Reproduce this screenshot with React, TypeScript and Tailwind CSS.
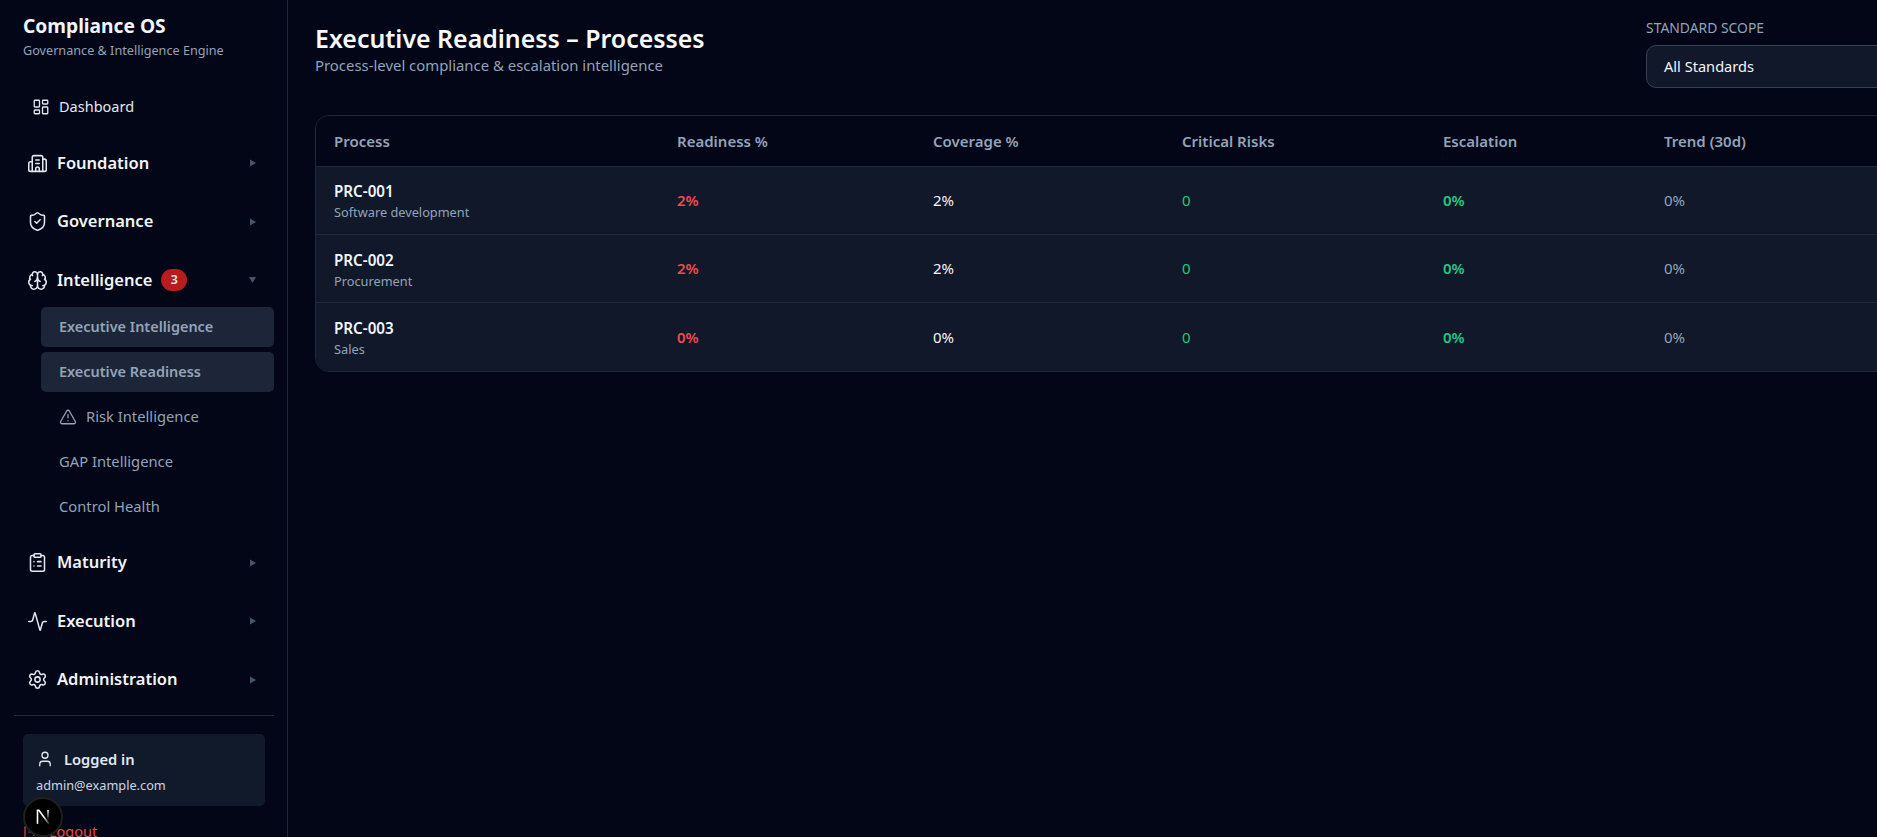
import { Activity, Brain, Building2, ClipboardList, LayoutDashboard, LogOut, Settings, ShieldCheck, TriangleAlert, User } from "lucide-react";
import type { ReactNode } from "react";

function Group({ icon, label, open, badge }: { icon: ReactNode; label: string; open?: boolean; badge?: string }) {
  return (
    <div className="flex h-[58.5px] items-center pl-[12px] pr-[18px]">
      <span className="flex w-[22px] justify-center text-[#e2e8f0]">{icon}</span>
      <span className="ml-[9px] text-[16.5px] font-semibold text-[#f1f5f9]">{label}</span>
      {badge && (
        <span className="ml-[9px] flex h-[22px] w-[26px] items-center justify-center rounded-full bg-[#b91c1c] text-[12.5px] font-semibold text-[#e2e8f0]">
          {badge}
        </span>
      )}
      <svg className="ml-auto text-[#475569]" width="7" height="8" viewBox="0 0 7 8" fill="currentColor">
        {open ? <path d="M0 1h7L3.5 7z" /> : <path d="M1 .5 7 4 1 7.5z" />}
      </svg>
    </div>
  );
}

function SubItem({ label, active, icon }: { label: string; active?: boolean; icon?: ReactNode }) {
  return (
    <div
      className={`flex h-[40px] items-center gap-[9px] rounded-[5px] pl-[18px] text-[#94a3b8] ${
        active ? "bg-[#1d2639] text-[14.45px] font-semibold" : "text-[14.75px]"
      }`}
    >
      {icon}
      <span>{label}</span>
    </div>
  );
}

const rows = [
  { id: "PRC-001", name: "Software development", r: "2%", c: "2%" },
  { id: "PRC-002", name: "Procurement", r: "2%", c: "2%" },
  { id: "PRC-003", name: "Sales", r: "0%", c: "0%" },
];

const heads = ["Process", "Readiness %", "Coverage %", "Critical Risks", "Escalation", "Trend (30d)"];

export default function App() {
  return (
    <div className="flex h-screen w-full overflow-hidden bg-[#020617] font-['Noto_Sans',sans-serif]">
      <aside className="relative flex h-full w-[288px] shrink-0 flex-col overflow-hidden border-r border-[#1e293b] bg-[#020617]">
        <div className="h-[86.5px] shrink-0 px-[23px] pt-[12px]">
          <div className="text-[19.2px] font-bold leading-[28px] text-[#f1f5f9]">Compliance OS</div>
          <div className="text-[12.65px] leading-[20px] text-[#94a3b8]">Governance &amp; Intelligence Engine</div>
        </div>
        <nav className="flex shrink-0 flex-col pl-[14px] pr-[13px]">
          <div className="flex h-[40px] items-center gap-[9px] pl-[18px] text-[14.5px] text-[#e2e8f0]">
            <LayoutDashboard size={18} strokeWidth={1.75} />
            <span>Dashboard</span>
          </div>
          <div className="mt-[7.5px]">
            <Group icon={<Building2 size={21} strokeWidth={1.75} />} label="Foundation" />
            <Group icon={<ShieldCheck size={21} strokeWidth={1.75} />} label="Governance" />
            <Group icon={<Brain size={21} strokeWidth={1.75} />} label="Intelligence" open badge="3" />
          </div>
          <div className="-mt-[3px] ml-[27px] flex flex-col gap-[5px]">
            <SubItem label="Executive Intelligence" active />
            <SubItem label="Executive Readiness" active />
            <SubItem label="Risk Intelligence" icon={<TriangleAlert size={18} strokeWidth={1.75} />} />
            <SubItem label="GAP Intelligence" />
            <SubItem label="Control Health" />
          </div>
          <div className="mt-[7px]">
            <Group icon={<ClipboardList size={21} strokeWidth={1.75} />} label="Maturity" />
            <Group icon={<Activity size={21} strokeWidth={1.75} />} label="Execution" />
            <Group icon={<Settings size={21} strokeWidth={1.75} />} label="Administration" />
          </div>
        </nav>
        <div className="ml-[14px] mr-[13px] mt-[6px] shrink-0 border-t border-[#1e293b] pl-[9px] pr-[9px] pt-[18px]">
          <div className="h-[72px] rounded-[5px] bg-[#111a2b] px-[13px] pt-[14px]">
            <div className="flex items-center gap-[10px] text-[14.7px] font-semibold text-[#e2e8f0]">
              <User size={18} strokeWidth={1.75} />
              <span>Logged in</span>
            </div>
            <div className="mt-[6px] text-[12.75px] text-[#cbd5e1]">admin@example.com</div>
          </div>
          <div className="mt-[15px] flex items-center gap-[10px] text-[14.5px] text-[#ef4444]">
            <LogOut size={16} strokeWidth={1.75} />
            <span>Logout</span>
          </div>
        </div>
        <div className="absolute bottom-0 left-[23px] flex h-[40px] w-[40px] items-center justify-center rounded-full border-2 border-[#1f1f1f] bg-black">
          <svg width="18" height="18" viewBox="0 0 18 18" fill="none">
            <defs>
              <linearGradient id="nfade" x1="5" y1="3" x2="15" y2="16" gradientUnits="userSpaceOnUse">
                <stop offset="0.45" stopColor="#fff" />
                <stop offset="1" stopColor="#fff" stopOpacity="0.15" />
              </linearGradient>
              <linearGradient id="nstem" x1="14" y1="2" x2="14" y2="11" gradientUnits="userSpaceOnUse">
                <stop offset="0" stopColor="#fff" />
                <stop offset="1" stopColor="#fff" stopOpacity="0.1" />
              </linearGradient>
            </defs>
            <path d="M3.5 16V2.2h1.4L15 16" stroke="url(#nfade)" strokeWidth="1.6" />
            <path d="M14 2v10" stroke="url(#nstem)" strokeWidth="1.6" />
          </svg>
        </div>
      </aside>
      <main className="min-w-0 flex-1 overflow-hidden px-[27px] pt-[21px]">
        <div className="w-[1800px]">
          <div className="flex h-[94px] items-start">
            <div className="w-[1331px] shrink-0">
              <h1 className="text-[24.9px] font-semibold leading-[34px] text-[#f8fafc]">Executive Readiness – Processes</h1>
              <p className="text-[14.9px] leading-[21px] text-[#94a3b8]">Process-level compliance &amp; escalation intelligence</p>
            </div>
            <div className="-mt-[1px]">
              <div className="text-[13.9px] leading-[16px] text-[#94a3b8]">STANDARD SCOPE</div>
              <div className="mt-[9px] flex h-[43px] w-[300px] items-center rounded-[10px] border border-[#334155] bg-[#10182a] px-[17px] text-[14.6px] text-[#f1f5f9]">
                All Standards
              </div>
            </div>
          </div>
          <div className="overflow-hidden rounded-[14px] border border-[#1e293b]">
            <table className="w-full table-fixed border-collapse">
              <colgroup>
                <col className="w-[343px]" />
                <col className="w-[256px]" />
                <col className="w-[249px]" />
                <col className="w-[261px]" />
                <col className="w-[221px]" />
                <col />
              </colgroup>
              <thead>
                <tr className="h-[50px] bg-[#020617]">
                  {heads.map((h) => (
                    <th key={h} className="px-[18px] pt-[1px] text-left text-[15px] font-semibold text-[#94a3b8]">
                      {h}
                    </th>
                  ))}
                </tr>
              </thead>
              <tbody className="bg-[#10182a]">
                {rows.map((r) => (
                  <tr key={r.id} className="h-[68.4px] border-t border-[#1e293b]">
                    <td className="px-[18px] pt-[4px]">
                      <div className="text-[15.2px] font-semibold leading-[21px] text-[#f1f5f9]">{r.id}</div>
                      <div className="text-[12.75px] leading-[21px] text-[#94a3b8]">{r.name}</div>
                    </td>
                    <td className="px-[18px] text-[15px] font-semibold text-[#f04b50]">{r.r}</td>
                    <td className="px-[18px] text-[15px] text-[#f1f5f9]">{r.c}</td>
                    <td className="px-[18px] text-[15px] text-[#22c983]">0</td>
                    <td className="px-[18px] text-[15px] font-semibold text-[#22c983]">0%</td>
                    <td className="px-[18px] text-[15px] text-[#94a3b8]">0%</td>
                  </tr>
                ))}
              </tbody>
            </table>
          </div>
        </div>
      </main>
    </div>
  );
}
